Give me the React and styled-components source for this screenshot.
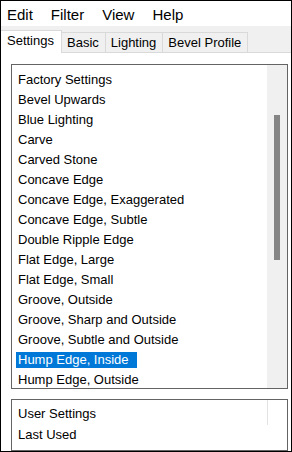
import React from "react";
import styled, { createGlobalStyle } from "styled-components";

const presets = [
  "Factory Settings",
  "Bevel Upwards",
  "Blue Lighting",
  "Carve",
  "Carved Stone",
  "Concave Edge",
  "Concave Edge, Exaggerated",
  "Concave Edge, Subtle",
  "Double Ripple Edge",
  "Flat Edge, Large",
  "Flat Edge, Small",
  "Groove, Outside",
  "Groove, Sharp and Outside",
  "Groove, Subtle and Outside",
  "Hump Edge, Inside",
  "Hump Edge, Outside",
];

const userPresets = ["User Settings", "Last Used"];

const menus = ["Edit", "Filter", "View", "Help"];
const tabs = ["Settings", "Basic", "Lighting", "Bevel Profile"];

function App() {
  const selected = "Hump Edge, Inside";
  return (
    <>
      <GlobalStyle />
      <Window>
        <MenuBar>
          {menus.map((m) => (
            <MenuItem key={m}>{m}</MenuItem>
          ))}
        </MenuBar>
        <TabStrip>
          {tabs.map((t, i) => (
            <Tab key={t} $active={i === 0}>
              {t}
            </Tab>
          ))}
          <TabFiller />
        </TabStrip>
        <Content>
          <ListBox $height={325}>
            <Items $top={7} $gap={4}>
              {presets.map((p) => (
                <Item key={p} $selected={p === selected}>
                  {p}
                </Item>
              ))}
            </Items>
            <ScrollTrack>
              <Thumb />
            </ScrollTrack>
          </ListBox>
          <ListBox $height={52} $spaced>
            <Items $top={6} $gap={5}>
              {userPresets.map((p) => (
                <Item key={p}>{p}</Item>
              ))}
            </Items>
            <SideColumn>
              <Divider />
            </SideColumn>
          </ListBox>
        </Content>
      </Window>
    </>
  );
}

export default App;

const GlobalStyle = createGlobalStyle`
  html, body {
    margin: 0;
    padding: 0;
    background: #ffffff;
  }
  body {
    font-family: "Liberation Sans", Arial, sans-serif;
  }
`;

const Window = styled.div`
  width: 292px;
  height: 452px;
  box-sizing: border-box;
  border: 1px solid #000000;
  background: #ffffff;
  display: flex;
  flex-direction: column;
  overflow: hidden;
`;

const MenuBar = styled.div`
  height: 25px;
  box-sizing: border-box;
  padding: 3px 0 0 6px;
  display: flex;
  gap: 18px;
  background: #ffffff;
`;

const MenuItem = styled.div`
  font-size: 15px;
  line-height: 22px;
  color: #000000;
`;

const TabStrip = styled.div`
  height: 27px;
  display: flex;
  align-items: flex-end;
  background: #f0f0f0;
`;

const Tab = styled.div`
  box-sizing: border-box;
  font-size: 13px;
  color: #000000;
  white-space: nowrap;
  border-top: 1px solid #d9d9d9;
  border-right: 1px solid #d9d9d9;
  background: ${(p) => (p.$active ? "#ffffff" : "#f0f0f0")};
  height: ${(p) => (p.$active ? "23px" : "21px")};
  line-height: ${(p) => (p.$active ? "20px" : "19px")};
  padding: ${(p) => (p.$active ? "0 7px 0 6px" : "0 6px 0 5px")};
  border-bottom: ${(p) => (p.$active ? "none" : "1px solid #d9d9d9")};
`;

const TabFiller = styled.div`
  flex: 1;
  align-self: stretch;
  border-bottom: 1px solid #d9d9d9;
`;

const Content = styled.div`
  flex: 1;
  display: flex;
  flex-direction: column;
  padding: 11px 3px 0 10px;
  background: #ffffff;
`;

const ListBox = styled.div`
  box-sizing: border-box;
  height: ${(p) => p.$height}px;
  flex-shrink: 0;
  margin-top: ${(p) => (p.$spaced ? "10px" : "0")};
  border: 1px solid #646464;
  display: flex;
  overflow: hidden;
  background: #ffffff;
`;

const Items = styled.div`
  flex: 1;
  display: flex;
  flex-direction: column;
  align-items: flex-start;
  gap: ${(p) => p.$gap}px;
  padding: ${(p) => p.$top}px 0 0 4px;
  overflow: hidden;
`;

const Item = styled.div`
  font-size: 13px;
  line-height: 16px;
  height: 16px;
  flex-shrink: 0;
  white-space: nowrap;
  padding: 0 8px 0 2px;
  color: ${(p) => (p.$selected ? "#ffffff" : "#000000")};
  background: ${(p) => (p.$selected ? "#0078d7" : "transparent")};
`;

const ScrollTrack = styled.div`
  width: 20px;
  flex-shrink: 0;
  background: #f0f0f0;
  display: flex;
  justify-content: center;
  padding-top: 50px;
`;

const Thumb = styled.div`
  width: 6px;
  height: 145px;
  background: #858585;
`;

const SideColumn = styled.div`
  width: 20px;
  flex-shrink: 0;
`;

const Divider = styled.div`
  width: 1px;
  height: 25px;
  background: #e3e3e3;
`;
